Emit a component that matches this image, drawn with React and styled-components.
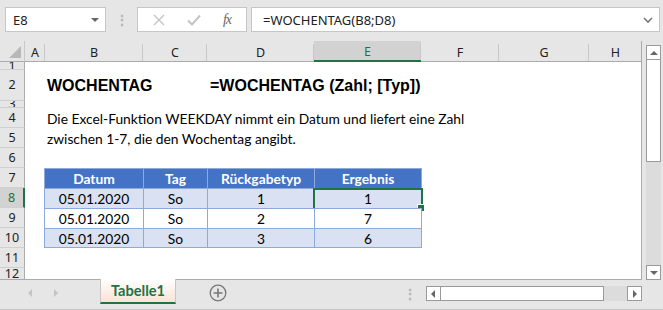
import React from 'react';
import styled, { createGlobalStyle } from 'styled-components';

const GlobalStyle = createGlobalStyle`
  html, body { margin: 0; padding: 0; background: #e6e6e6; }
  * { box-sizing: border-box; }
`;

const UI_FONT = `"Noto Sans", "Open Sans", sans-serif`;
const CELL_FONT = `Lato, "Liberation Sans", sans-serif`;
const GREEN = '#217346';

const COLS = [
  { key: 'A', w: 20 },
  { key: 'B', w: 98 },
  { key: 'C', w: 64 },
  { key: 'D', w: 107 },
  { key: 'E', w: 107 },
  { key: 'F', w: 78 },
  { key: 'G', w: 90 },
  { key: 'H', w: 53 },
];

// row heights: 1..12
const ROWS = [8, 31, 7, 20, 20, 20, 20, 20, 20, 20, 20, 12];

const Window = styled.div`
  width: 663px;
  height: 310px;
  display: flex;
  flex-direction: column;
  background: #e6e6e6;
  overflow: hidden;
  font-family: ${UI_FONT};
`;

// ---------- formula bar ----------
const FormulaBar = styled.div`
  height: 41px;
  display: flex;
  align-items: flex-start;
  padding: 7px 3px 0 5px;
`;

const NameBox = styled.div`
  width: 101px;
  height: 25px;
  background: #fff;
  border: 1px solid #c6c6c6;
  display: flex;
  align-items: center;
  justify-content: space-between;
  padding: 0 6px 0 7px;
  font-size: 13px;
  color: #222;
`;

const Grip = styled.div`
  width: 31px;
  height: 25px;
  display: flex;
  align-items: center;
  justify-content: center;
  color: #b5b5b5;
  font-size: 14px;
  font-weight: bold;
`;

const FuncBox = styled.div`
  width: 110px;
  height: 25px;
  background: #fff;
  border: 1px solid #c6c6c6;
  display: flex;
  align-items: center;
  justify-content: space-around;
  padding: 0 4px;
`;

const Fx = styled.span`
  font-family: "Liberation Serif", serif;
  font-style: italic;
  font-size: 14px;
  color: #666;
  letter-spacing: -1px;
`;

const FormulaInput = styled.div`
  flex: 1;
  margin-left: 4px;
  height: 25px;
  background: #fff;
  border: 1px solid #c6c6c6;
  display: flex;
  align-items: center;
  justify-content: space-between;
  padding: 0 6px 0 11px;
  font-size: 13px;
  color: #222;
`;

// ---------- sheet ----------
const Main = styled.div`
  display: flex;
  height: 239px;
`;

const Sheet = styled.div`
  width: 642px;
  display: grid;
  grid-template-columns: 25px ${COLS.map((c) => c.w + 'px').join(' ')};
  grid-template-rows: 21px ${ROWS.map((h) => h + 'px').join(' ')};
  background: #fff;
  border-right: 1px solid #ababab;
  border-bottom: 1px solid #ababab;
  overflow: hidden;
`;

const Corner = styled.div`
  grid-row: 1;
  grid-column: 1;
  background: #e6e6e6;
  border-right: 1px solid #c8c8c8;
  border-bottom: 1px solid #ababab;
  position: relative;
  &::after {
    content: '';
    position: absolute;
    right: 3px;
    bottom: 3px;
    border-style: solid;
    border-width: 0 0 12px 12px;
    border-color: transparent transparent #b8b8b8 transparent;
  }
`;

const ColHead = styled.div`
  grid-row: 1;
  background: ${({ $active }) => ($active ? '#d2d2d2' : '#e6e6e6')};
  color: ${({ $active }) => ($active ? GREEN : '#222')};
  border-bottom: ${({ $active }) => ($active ? `2px solid ${GREEN}` : '1px solid #ababab')};
  font-size: 12.5px;
  display: flex;
  align-items: center;
  justify-content: center;
  padding-top: 2px;
  position: relative;
  &::after {
    content: '';
    position: absolute;
    right: 0;
    top: 3px;
    bottom: 0;
    width: 1px;
    background: #c8c8c8;
  }
`;

const RowHead = styled.div`
  grid-column: 1;
  background: ${({ $active }) => ($active ? '#d2d2d2' : '#e6e6e6')};
  color: ${({ $active }) => ($active ? GREEN : '#222')};
  border-right: ${({ $active }) => ($active ? `2px solid ${GREEN}` : '1px solid #ababab')};
  border-bottom: 1px solid #d0d0d0;
  font-size: 12.5px;
  display: flex;
  align-items: center;
  justify-content: center;
  overflow: hidden;
  line-height: 20px;
`;

const Title = styled.div`
  grid-row: 3;
  grid-column: ${({ $col }) => $col};
  grid-column-end: span 4;
  align-self: center;
  padding-left: ${({ $pad }) => $pad}px;
  font-family: "Liberation Sans", Arial, sans-serif;
  font-weight: 700;
  font-size: 16px;
  color: #000;
  white-space: nowrap;
`;

const Note = styled.div`
  grid-row: ${({ $row }) => $row};
  grid-column: 3 / span 6;
  align-self: center;
  padding-left: 2px;
  font-family: ${CELL_FONT};
  font-size: 13.8px;
  color: #000;
  white-space: nowrap;
`;

const Table = styled.div`
  grid-row: 8 / span 4;
  grid-column: 3 / span 4;
  margin-left: -1px;
  display: grid;
  grid-template-columns: 99px 64px 107px 107px;
  grid-template-rows: repeat(4, 20px);
  border-left: 1px solid #8ea9db;
  font-family: ${CELL_FONT};
  font-size: 13.8px;
`;

const Cell = styled.div`
  display: flex;
  align-items: center;
  justify-content: center;
  background: ${({ $head, $band }) => ($head ? '#4472c4' : $band ? '#d9e1f2' : '#fff')};
  color: ${({ $head }) => ($head ? '#fff' : '#000')};
  font-weight: ${({ $head }) => ($head ? 700 : 400)};
  border-right: 1px solid #8ea9db;
  border-top: 1px solid #8ea9db;
  border-bottom: ${({ $last }) => ($last ? '1px solid #8ea9db' : 'none')};
  position: relative;
  ${({ $selected }) =>
    $selected &&
    `
    &::before {
      content: '';
      position: absolute;
      inset: -1px -2px -2px -2px;
      border: 2px solid ${GREEN};
    }
    &::after {
      content: '';
      position: absolute;
      right: -4px;
      bottom: -4px;
      width: 6px;
      height: 6px;
      background: ${GREEN};
      border: 1px solid #fff;
    }
  `}
`;

// ---------- scrollbars ----------
const VScroll = styled.div`
  width: 21px;
  display: flex;
  flex-direction: column;
  padding: 4px 2px 0 4px;
  background: #e6e6e6;
`;

const ScrollBtn = styled.div`
  width: 15px;
  height: 15px;
  background: #fff;
  border: 1px solid #9a9a9a;
  display: flex;
  align-items: center;
  justify-content: center;
  flex: none;
`;

const VThumb = styled.div`
  height: 102px;
  width: 15px;
  background: #fff;
  border: 1px solid #9a9a9a;
  border-top: none;
  flex: none;
`;

const VTrack = styled.div`
  flex: 1;
  width: 15px;
  background: #dcdcdc;
`;

const Arrow = styled.span`
  width: 0;
  height: 0;
  border-style: solid;
  ${({ $dir }) =>
    ({
      up: 'border-width: 0 4px 4px 4px; border-color: transparent transparent #666 transparent;',
      down: 'border-width: 4px 4px 0 4px; border-color: #666 transparent transparent transparent;',
      left: 'border-width: 4px 4px 4px 0; border-color: transparent #666 transparent transparent;',
      right: 'border-width: 4px 0 4px 4px; border-color: transparent transparent transparent #666;',
    })[$dir]}
`;

const BottomBar = styled.div`
  height: 30px;
  display: flex;
  align-items: flex-start;
  border-bottom: 1px solid #c6c6c6;
`;

const TabNav = styled.div`
  width: 100px;
  height: 25px;
  display: flex;
  align-items: center;
  justify-content: center;
  gap: 22px;
  padding-right: 14px;
`;

const NavArrow = styled.span`
  width: 0;
  height: 0;
  border-style: solid;
  border-width: 4px ${({ $left }) => ($left ? '4px 4px 0' : '0 4px 4px')};
  border-color: transparent ${({ $left }) => ($left ? '#c4c4c4' : 'transparent')} transparent
    ${({ $left }) => ($left ? 'transparent' : '#c4c4c4')};
`;

const Tab = styled.div`
  width: 76px;
  height: 25px;
  margin-top: -1px;
  background: linear-gradient(#ffffff, #fbe2d5);
  border: 1px solid #c6c6c6;
  border-top: none;
  border-bottom: 2px solid ${GREEN};
  color: ${GREEN};
  font-family: ${CELL_FONT};
  font-weight: 700;
  font-size: 14.6px;
  display: flex;
  align-items: center;
  justify-content: center;
`;

const AddSheet = styled.div`
  width: 84px;
  height: 25px;
  display: flex;
  align-items: center;
  justify-content: center;
`;

const Spacer = styled.div`
  flex: 1;
`;

const HScroll = styled.div`
  width: 247px;
  height: 25px;
  display: flex;
  align-items: center;
  padding-top: 2px;
`;

const HGrip = styled.div`
  width: 33px;
  text-align: center;
  color: #b5b5b5;
  font-weight: bold;
  font-size: 14px;
`;

const HThumb = styled.div`
  width: 173px;
  height: 15px;
  background: #fff;
  border: 1px solid #9a9a9a;
  border-left: none;
`;

const HTrack = styled.div`
  width: 25px;
  height: 15px;
  background: #dcdcdc;
`;

const EndGap = styled.div`
  width: 21px;
`;

const rows = [
  { datum: '05.01.2020', tag: 'So', typ: '1', res: '1' },
  { datum: '05.01.2020', tag: 'So', typ: '2', res: '7' },
  { datum: '05.01.2020', tag: 'So', typ: '3', res: '6' },
];

export default function App() {
  return (
    <>
      <GlobalStyle />
      <Window>
        <FormulaBar>
          <NameBox>
            <span>E8</span>
            <Arrow $dir="down" />
          </NameBox>
          <Grip>⋮</Grip>
          <FuncBox>
            <svg width="12" height="12" viewBox="0 0 12 12">
              <path d="M1 1 L11 11 M11 1 L1 11" stroke="#c4c4c4" strokeWidth="1.4" />
            </svg>
            <svg width="14" height="12" viewBox="0 0 14 12">
              <path d="M1 6.5 L5 10.5 L13 1.5" stroke="#c4c4c4" strokeWidth="2" fill="none" />
            </svg>
            <Fx>fx</Fx>
          </FuncBox>
          <FormulaInput>
            <span>=WOCHENTAG(B8;D8)</span>
            <svg width="10" height="8" viewBox="0 0 10 8">
              <path d="M1 2 L5 6 L9 2" stroke="#777" strokeWidth="1.6" fill="none" />
            </svg>
          </FormulaInput>
        </FormulaBar>

        <Main>
          <Sheet>
            <Corner />
            {COLS.map((c, i) => (
              <ColHead key={c.key} $active={c.key === 'E'} style={{ gridColumn: i + 2 }}>
                {c.key}
              </ColHead>
            ))}
            {ROWS.map((h, i) => (
              <RowHead key={i} $active={i + 1 === 8} style={{ gridRow: i + 2 }}>
                {i + 1}
              </RowHead>
            ))}

            <Title $col={3} $pad={2}>WOCHENTAG</Title>
            <Title $col={5} $pad={3}>=WOCHENTAG (Zahl; [Typ])</Title>

            <Note $row={5}>Die Excel-Funktion WEEKDAY nimmt ein Datum und liefert eine Zahl</Note>
            <Note $row={6}>zwischen 1-7, die den Wochentag angibt.</Note>

            <Table>
              <Cell $head>Datum</Cell>
              <Cell $head>Tag</Cell>
              <Cell $head>Rückgabetyp</Cell>
              <Cell $head>Ergebnis</Cell>
              {rows.map((r, i) => (
                <React.Fragment key={i}>
                  <Cell $band={i !== 1} $last={i === 2}>{r.datum}</Cell>
                  <Cell $band={i !== 1} $last={i === 2}>{r.tag}</Cell>
                  <Cell $band={i !== 1} $last={i === 2}>{r.typ}</Cell>
                  <Cell $band={i !== 1} $last={i === 2} $selected={i === 0}>
                    {r.res}
                  </Cell>
                </React.Fragment>
              ))}
            </Table>
          </Sheet>

          <VScroll>
            <ScrollBtn>
              <Arrow $dir="up" />
            </ScrollBtn>
            <VThumb />
            <VTrack />
            <ScrollBtn>
              <Arrow $dir="down" />
            </ScrollBtn>
          </VScroll>
        </Main>

        <BottomBar>
          <TabNav>
            <NavArrow $left />
            <NavArrow />
          </TabNav>
          <Tab>Tabelle1</Tab>
          <AddSheet>
            <svg width="18" height="18" viewBox="0 0 18 18">
              <circle cx="9" cy="9" r="7.8" stroke="#777" strokeWidth="1.3" fill="none" />
              <path d="M9 4.5 V13.5 M4.5 9 H13.5" stroke="#777" strokeWidth="1.6" />
            </svg>
          </AddSheet>
          <Spacer />
          <HScroll>
            <HGrip>⋮</HGrip>
            <ScrollBtn>
              <Arrow $dir="left" />
            </ScrollBtn>
            <HThumb />
            <HTrack />
            <ScrollBtn>
              <Arrow $dir="right" />
            </ScrollBtn>
          </HScroll>
          <EndGap />
        </BottomBar>
      </Window>
    </>
  );
}
